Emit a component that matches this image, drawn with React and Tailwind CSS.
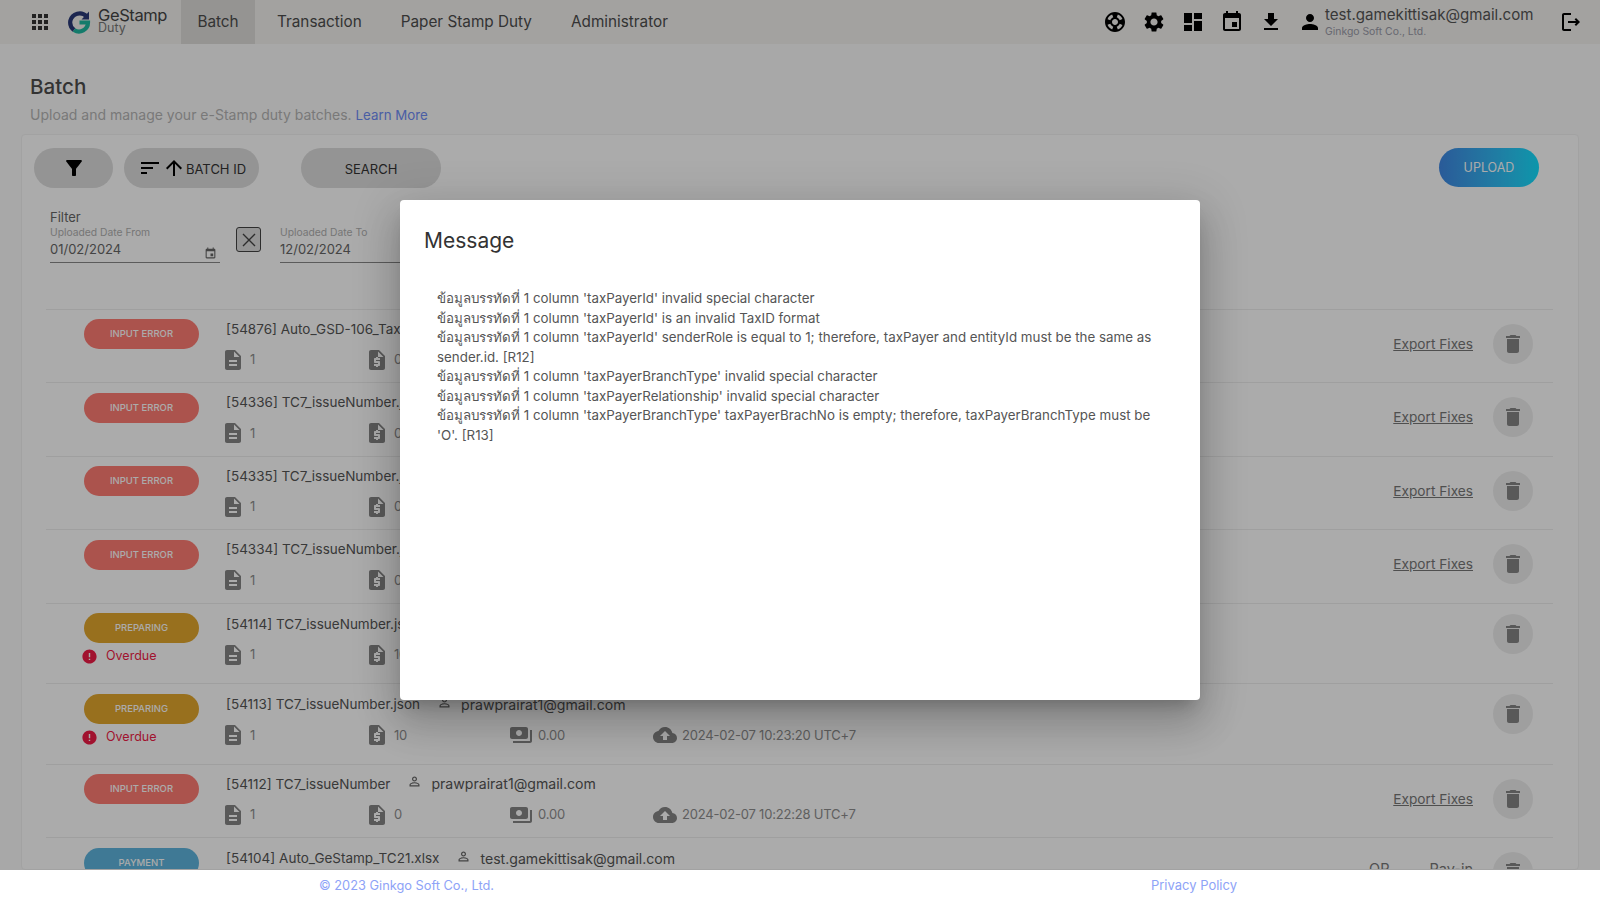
import React from 'react';

const paths = {
  apps: 'M4 8h4V4H4v4zm6 12h4v-4h-4v4zm-6 0h4v-4H4v4zm0-6h4v-4H4v4zm6 0h4v-4h-4v4zm6-10v4h4V4h-4zm-6 4h4V4h-4v4zm6 6h4v-4h-4v4zm0 6h4v-4h-4v4z',
  support: 'M12,2C6.48,2,2,6.48,2,12c0,5.52,4.48,10,10,10s10-4.48,10-10C22,6.48,17.52,2,12,2z M19.46,9.12l-2.78,1.15 c-0.51-1.36-1.58-2.44-2.95-2.94l1.15-2.78C16.98,5.35,18.65,7.02,19.46,9.12z M12,15c-1.66,0-3-1.34-3-3s1.34-3,3-3s3,1.34,3,3 S13.66,15,12,15z M9.13,4.54l1.17,2.78c-1.38,0.5-2.47,1.59-2.98,2.97L4.54,9.13C5.35,7.02,7.02,5.35,9.13,4.54z M4.54,14.87 l2.78-1.15c0.51,1.38,1.59,2.46,2.97,2.96l-1.17,2.78C7.02,18.65,5.35,16.98,4.54,14.87z M14.88,19.46l-1.15-2.78 c1.37-0.51,2.45-1.59,2.95-2.97l2.78,1.17C18.65,16.98,16.98,18.65,14.88,19.46z',
  settings: 'M19.14 12.94c.04-.3.06-.61.06-.94 0-.32-.02-.64-.07-.94l2.03-1.58c.18-.14.23-.41.12-.61l-1.92-3.32c-.12-.22-.37-.29-.59-.22l-2.39.96c-.5-.38-1.03-.7-1.62-.94l-.36-2.54c-.04-.24-.24-.41-.48-.41h-3.84c-.24 0-.43.17-.47.41l-.36 2.54c-.59.24-1.13.57-1.62.94l-2.39-.96c-.22-.08-.47 0-.59.22L2.74 8.87c-.12.21-.08.47.12.61l2.03 1.58c-.05.3-.09.63-.09.94s.02.64.07.94l-2.03 1.58c-.18.14-.23.41-.12.61l1.92 3.32c.12.22.37.29.59.22l2.39-.96c.5.38 1.03.7 1.62.94l.36 2.54c.05.24.24.41.48.41h3.84c.24 0 .44-.17.47-.41l.36-2.54c.59-.24 1.13-.56 1.62-.94l2.39.96c.22.08.47 0 .59-.22l1.92-3.32c.12-.22.07-.47-.12-.61l-2.01-1.58zM12 15.6c-1.98 0-3.6-1.62-3.6-3.6s1.62-3.6 3.6-3.6 3.6 1.62 3.6 3.6-1.62 3.6-3.6 3.6z',
  dashboard: 'M3 13h8V3H3v10zm0 8h8v-6H3v6zm10 0h8V11h-8v10zm0-18v6h8V3h-8z',
  event: 'M17 12h-5v5h5v-5zM16 1v2H8V1H6v2H5c-1.11 0-1.99.9-1.99 2L3 19c0 1.1.89 2 2 2h14c1.1 0 2-.9 2-2V5c0-1.1-.9-2-2-2h-1V1h-2zm3 18H5V8h14v11z',
  download: 'M19 9h-4V3H9v6H5l7 7 7-7zM5 18v2h14v-2H5z',
  person: 'M12 12c2.21 0 4-1.79 4-4s-1.79-4-4-4-4 1.79-4 4 1.79 4 4 4zm0 2c-2.67 0-8 1.34-8 4v2h16v-2c0-2.66-5.33-4-8-4z',
  personOutline: 'M12 5.9c1.16 0 2.1.94 2.1 2.1s-.94 2.1-2.1 2.1S9.9 9.16 9.9 8s.94-2.1 2.1-2.1m0 9c2.97 0 6.1 1.46 6.1 2.1v1.1H5.9V17c0-.64 3.13-2.1 6.1-2.1M12 4C9.79 4 8 5.79 8 8s1.79 4 4 4 4-1.79 4-4-1.79-4-4-4zm0 9c-2.67 0-8 1.34-8 4v3h16v-3c0-2.66-5.33-4-8-4z',
  logout: 'M17 8l-1.41 1.41L17.17 11H9v2h8.17l-1.58 1.58L17 16l4-4-4-4zM5 5h7V3H5c-1.1 0-2 .9-2 2v14c0 1.1.9 2 2 2h7v-2H5V5z',
  filter: 'M4.25 5.61C6.27 8.2 10 13 10 13v6c0 .55.45 1 1 1h2c.55 0 1-.45 1-1v-6s3.72-4.8 5.74-7.39c.51-.66.04-1.61-.79-1.61H5.04c-.83 0-1.3.95-.79 1.61z',
  sort: 'M3 18h6v-2H3v2zM3 6v2h18V6H3zm0 7h12v-2H3v2z',
  arrowUp: 'M4 12l1.41 1.41L11 7.83V20h2V7.83l5.58 5.59L20 12l-8-8-8 8z',
  file: 'M14 2H6c-1.1 0-1.99.9-1.99 2L4 20c0 1.1.89 2 1.99 2H18c1.1 0 2-.9 2-2V8l-6-6zm2 16H8v-2h8v2zm0-4H8v-2h8v2zm-3-5V3.5L18.5 9H13z',
  quote: 'M14 2H6c-1.1 0-1.99.9-1.99 2L4 20c0 1.1.89 2 1.99 2H18c1.1 0 2-.9 2-2V8l-6-6zm1 10h-4v1h3c.55 0 1 .45 1 1v3c0 .55-.45 1-1 1h-1v1h-2v-1H9v-2h4v-1h-3c-.55 0-1-.45-1-1v-3c0-.55.45-1 1-1h1V9h2v1h2v2zm-2-4V3.5L18.5 9H13z',
  payments: 'M19 14V6c0-1.1-.9-2-2-2H3c-1.1 0-2 .9-2 2v8c0 1.1.9 2 2 2h14c1.1 0 2-.9 2-2zm-9-1c-1.66 0-3-1.34-3-3s1.34-3 3-3 3 1.34 3 3-1.34 3-3 3zm13-6v11c0 1.1-.9 2-2 2H4v-2h17V7h2z',
  cloud: 'M19.35 10.04C18.67 6.59 15.64 4 12 4 9.11 4 6.6 5.64 5.35 8.04 2.34 8.36 0 10.91 0 14c0 3.31 2.69 6 6 6h13c2.76 0 5-2.24 5-5 0-2.64-2.05-4.78-4.65-4.96zM14 13v4h-4v-4H7l5-5 5 5h-3z',
  trash: 'M6 19c0 1.1.9 2 2 2h8c1.1 0 2-.9 2-2V7H6v12zM19 4h-3.5l-1-1h-5l-1 1H5v2h14V4z',
  error: 'M12 2C6.48 2 2 6.48 2 12s4.48 10 10 10 10-4.48 10-10S17.52 2 12 2zm1 15h-2v-2h2v2zm0-4h-2V7h2v6z',
};

function Icon({ name, className }) {
  return (
    <svg viewBox="0 0 24 24" fill="currentColor" className={className}>
      <path d={paths[name]} />
    </svg>
  );
}

function Logo() {
  return (
    <svg viewBox="0 0 24 24" className="w-[24px] h-[24px] shrink-0" fill="none" strokeWidth="4.2">
      <path d="M19.5 6.2A9.6 9.6 0 0 0 3.4 10.5 9.6 9.6 0 0 0 7 20" stroke="#2a3a78" />
      <path d="M12.5 12.5H21A9 9 0 0 1 7 20" stroke="#1fb8a0" />
      <path d="M22 1.5v8h-7.5z" fill="#2a3a78" />
    </svg>
  );
}

const pillStyles = {
  error: 'bg-[#ff7d74]',
  preparing: 'bg-[#e3a72e]',
  payment: 'bg-[#5eb5de]',
};

const rows = [
  { id: 54876, name: 'Auto_GSD-106_TaxPayer.xlsx', status: 'INPUT ERROR', tone: 'error', user: 'test.gamekittisak@gmail.com', docs: 1, stamps: 0, date: '2024-02-08 11:02:41 UTC+7', exp: true },
  { id: 54336, name: 'TC7_issueNumber.json', status: 'INPUT ERROR', tone: 'error', user: 'prawprairat1@gmail.com', docs: 1, stamps: 0, date: '2024-02-07 15:10:12 UTC+7', exp: true },
  { id: 54335, name: 'TC7_issueNumber.json', status: 'INPUT ERROR', tone: 'error', user: 'prawprairat1@gmail.com', docs: 1, stamps: 0, date: '2024-02-07 15:09:48 UTC+7', exp: true },
  { id: 54334, name: 'TC7_issueNumber.json', status: 'INPUT ERROR', tone: 'error', user: 'prawprairat1@gmail.com', docs: 1, stamps: 0, date: '2024-02-07 15:09:20 UTC+7', exp: true },
  { id: 54114, name: 'TC7_issueNumber.json', status: 'PREPARING', tone: 'preparing', user: 'prawprairat1@gmail.com', docs: 1, stamps: 10, date: '2024-02-07 10:24:02 UTC+7', overdue: true },
  { id: 54113, name: 'TC7_issueNumber.json', status: 'PREPARING', tone: 'preparing', user: 'prawprairat1@gmail.com', docs: 1, stamps: 10, date: '2024-02-07 10:23:20 UTC+7', overdue: true },
  { id: 54112, name: 'TC7_issueNumber', status: 'INPUT ERROR', tone: 'error', user: 'prawprairat1@gmail.com', docs: 1, stamps: 0, date: '2024-02-07 10:22:28 UTC+7', exp: true },
  { id: 54104, name: 'Auto_GeStamp_TC21.xlsx', status: 'PAYMENT', tone: 'payment', user: 'test.gamekittisak@gmail.com', docs: 1, stamps: 1, date: '2024-02-06 16:40:11 UTC+7', pay: true },
];

const messages = [
  "ข้อมูลบรรทัดที่ 1 column 'taxPayerId' invalid special character",
  "ข้อมูลบรรทัดที่ 1 column 'taxPayerId' is an invalid TaxID format",
  "ข้อมูลบรรทัดที่ 1 column 'taxPayerId' senderRole is equal to 1; therefore, taxPayer and entityId must be the same as sender.id. [R12]",
  "ข้อมูลบรรทัดที่ 1 column 'taxPayerBranchType' invalid special character",
  "ข้อมูลบรรทัดที่ 1 column 'taxPayerRelationship' invalid special character",
  "ข้อมูลบรรทัดที่ 1 column 'taxPayerBranchType' taxPayerBrachNo is empty; therefore, taxPayerBranchType must be 'O'. [R13]",
];

function Stat({ icon, children }) {
  return (
    <div className="flex items-center gap-[5px] text-[#8e8e8e] text-[13px] -tracking-[0.2px]">
      <Icon name={icon} className="w-[24px] h-[24px] shrink-0 text-[#858585]" />
      <span className="whitespace-nowrap">{children}</span>
    </div>
  );
}

function BatchRow({ row }) {
  return (
    <div className={`flex border-t border-[#eeeeee] shrink-0 ${row.overdue ? 'h-[80.5px]' : 'h-[73.5px]'}`}>
      <div className="w-[175px] pl-[38px] pt-[9.5px] shrink-0">
        <div className={`w-[115px] h-[30px] rounded-full flex items-center justify-center text-white text-[9.5px] font-medium ${pillStyles[row.tone]}`}>
          {row.status}
        </div>
        {row.overdue && (
          <div className="flex items-center gap-[8px] mt-[4px] text-[#f01c46] text-[12.5px]">
            <Icon name="error" className="w-[17px] h-[17px] -ml-[3px]" />
            Overdue
          </div>
        )}
      </div>
      <div className={`w-[700px] shrink-0 ${row.overdue || row.pay ? 'pt-[9px]' : 'pt-[8px]'}`}>
        <div className="flex items-center h-[22px] pl-[5px] text-[#555555] text-[13.5px] whitespace-nowrap">
          <span>[{row.id}] {row.name}</span>
          <Icon name="personOutline" className="w-[15px] h-[15px] ml-[17px] -mt-[4px] text-[#666666]" />
          <span className="ml-[9px] text-[14.1px]">{row.user}</span>
        </div>
        <div className="grid grid-cols-[144px_144px_144px_1fr] mt-[8px]">
          <Stat icon="file">{row.docs}</Stat>
          <Stat icon="quote">{row.stamps}</Stat>
          <Stat icon="payments">0.00</Stat>
          <Stat icon="cloud">{row.date}</Stat>
        </div>
      </div>
      <div className={`ml-auto pr-[20px] flex items-start ${row.overdue ? 'pt-[10px]' : 'pt-[14px]'}`}>
        {row.exp && (
          <a className="h-[40px] flex items-center mr-[20px] text-[13.7px] text-[#777777] underline">Export Fixes</a>
        )}
        {row.pay && (
          <div className="h-[34px] flex items-center gap-[40px] mr-[20px] text-[14.5px] text-[#777777]">
            <span>QR</span>
            <span>Pay-in</span>
          </div>
        )}
        <div className="w-[40px] h-[40px] rounded-full bg-[#eeeeee] flex items-center justify-center">
          <Icon name="trash" className="w-[24px] h-[24px] text-[#858585]" />
        </div>
      </div>
    </div>
  );
}

export default function App() {
  return (
    <div className="relative h-screen flex flex-col overflow-hidden bg-[#fbfbfb] font-['Inter','Noto_Sans',sans-serif]">
      {/* Top bar */}
      <header className="h-[44px] shrink-0 flex items-center bg-[#f3f2ef] text-[#4d4d4d]">
        <Icon name="apps" className="w-[24px] h-[24px] ml-[28px] text-[#333333]" />
        <div className="flex items-center ml-[15px] w-[114px]">
          <Logo />
          <div className="ml-[7px] leading-none -mt-[3px]">
            <div className="text-[16.5px] -tracking-[0.4px] text-[#444444]">GeStamp</div>
            <div className="text-[12.5px] -mt-[2px] text-[#777777]">Duty</div>
          </div>
        </div>
        <nav className="flex h-full text-[15.3px]">
          <div className="w-[74px] flex items-center justify-center bg-[#dfddda]">Batch</div>
          <div className="pl-[22px] pr-[19px] flex items-center">Transaction</div>
          <div className="px-[20px] flex items-center">Paper Stamp Duty</div>
          <div className="px-[19px] flex items-center">Administrator</div>
        </nav>
        <div className="ml-auto flex items-center text-black">
          <Icon name="support" className="w-[24px] h-[24px]" />
          <Icon name="settings" className="w-[24px] h-[24px] ml-[15px]" />
          <Icon name="dashboard" className="w-[24px] h-[24px] ml-[15px]" />
          <Icon name="event" className="w-[24px] h-[24px] ml-[15px]" />
          <Icon name="download" className="w-[24px] h-[24px] ml-[15px]" />
          <Icon name="person" className="w-[24px] h-[24px] ml-[15px]" />
          <div className="ml-[3px] w-[234px] leading-none">
            <div className="text-[15.1px] text-[#555555]">test.gamekittisak@gmail.com</div>
            <div className="text-[10.4px] mt-[5px] text-[#9a9aa8]">Ginkgo Soft Co., Ltd.</div>
          </div>
          <Icon name="logout" className="w-[24px] h-[24px] mr-[17px]" />
        </div>
      </header>

      {/* Page */}
      <main className="flex-1 min-h-0 flex flex-col overflow-hidden">
        <div className="px-[30px] pt-[28px] shrink-0">
          <h1 className="text-[20.6px] leading-[29px] font-medium text-[#4d4d4d]">Batch</h1>
          <p className="text-[14px] leading-[20px] mt-[4px] text-[#b5b5b5]">
            Upload and manage your e-Stamp duty batches. <span className="text-[#6f8cf5] text-[13.3px]">Learn More</span>
          </p>
        </div>
        <section className="mx-[21px] mt-[9px] flex-1 min-h-0 flex flex-col bg-white border border-[#f2f2f2] rounded-[4px] pl-[24px] pr-[25px] overflow-hidden">
          <div className="flex items-start pt-[13px] shrink-0">
            <div className="w-[79px] h-[40px] -ml-[12px] rounded-full bg-[#dddddd] flex items-center justify-center">
              <Icon name="filter" className="w-[24px] h-[24px] text-black" />
            </div>
            <div className="w-[135px] h-[40px] ml-[11px] pl-[14px] rounded-full bg-[#dddddd] flex items-center text-[13px] text-[#333333]">
              <Icon name="sort" className="w-[24px] h-[24px] text-black" />
              <Icon name="arrowUp" className="w-[24px] h-[24px] text-black" />
              <span className="pt-[3px]">BATCH ID</span>
            </div>
            <div className="w-[140px] h-[40px] ml-[42px] pt-[4px] rounded-full bg-[#dddddd] flex items-center justify-center text-[13px] text-[#333333]">SEARCH</div>
            <div className="ml-auto mr-[14px] w-[100px] h-[39px] pt-[1px] rounded-full bg-gradient-to-r from-[#3f87e3] to-[#0fe0ff] flex items-center justify-center text-[12.5px] text-white">UPLOAD</div>
          </div>
          <div className="h-[120.8px] shrink-0 pl-[4px] pt-[20px]">
            <div className="text-[13px] leading-[18px] text-[#666666]">Filter</div>
            <div className="flex items-start">
              <div className="w-[170px]">
                <div className="text-[10.3px] leading-[12px] text-[#b0b0b0]">Uploaded Date From</div>
                <div className="flex items-center justify-between h-[25px] pr-[3px] border-b border-[#888888] text-[13px] text-[#666666]">
                  01/02/2024
                  <Icon name="event" className="w-[13px] h-[13px] mt-[6px] text-[#666666]" />
                </div>
              </div>
              <div className="w-[25px] h-[25px] ml-[16px] mt-[1px] border border-[#444444] rounded-[3px] bg-[#dddddd] flex items-center justify-center">
                <svg viewBox="0 0 16 16" className="w-[16px] h-[16px] text-[#444444]" fill="none" stroke="currentColor" strokeWidth="1.4">
                  <path d="M2 2l12 12M14 2L2 14" />
                </svg>
              </div>
              <div className="w-[170px] ml-[19px]">
                <div className="text-[10.3px] leading-[12px] text-[#b0b0b0]">Uploaded Date To</div>
                <div className="flex items-center h-[25px] border-b border-[#888888] text-[13px] text-[#666666]">12/02/2024</div>
              </div>
            </div>
          </div>
          {rows.map((row) => (
            <BatchRow key={row.id} row={row} />
          ))}
        </section>
      </main>

      {/* Dimmed backdrop and dialog */}
      <div className="absolute inset-0 z-10 bg-black/[0.33] flex items-center justify-center">
        <div className="w-[800px] h-[500px] bg-white rounded-[4px] shadow-[0_11px_15px_-7px_rgba(0,0,0,0.2),0_24px_38px_3px_rgba(0,0,0,0.14),0_9px_46px_8px_rgba(0,0,0,0.12)] p-[24px]">
          <h2 className="text-[21px] leading-[30px] text-[#333333] mt-[2px]">Message</h2>
          <div className="mt-[33px] pl-[13px] pr-[20px] text-[13.35px] leading-[19.5px] text-[#555555]">
            {messages.map((m) => (
              <div key={m}>{m}</div>
            ))}
          </div>
        </div>
      </div>

      <footer className="relative z-20 h-[30px] shrink-0 pt-[2px] bg-white flex items-center justify-between pl-[319px] pr-[363px] text-[13px] text-[#8ea3f7]">
        <span className="text-[12.8px]">© 2023 Ginkgo Soft Co., Ltd.</span>
        <span>Privacy Policy</span>
      </footer>
    </div>
  );
}
